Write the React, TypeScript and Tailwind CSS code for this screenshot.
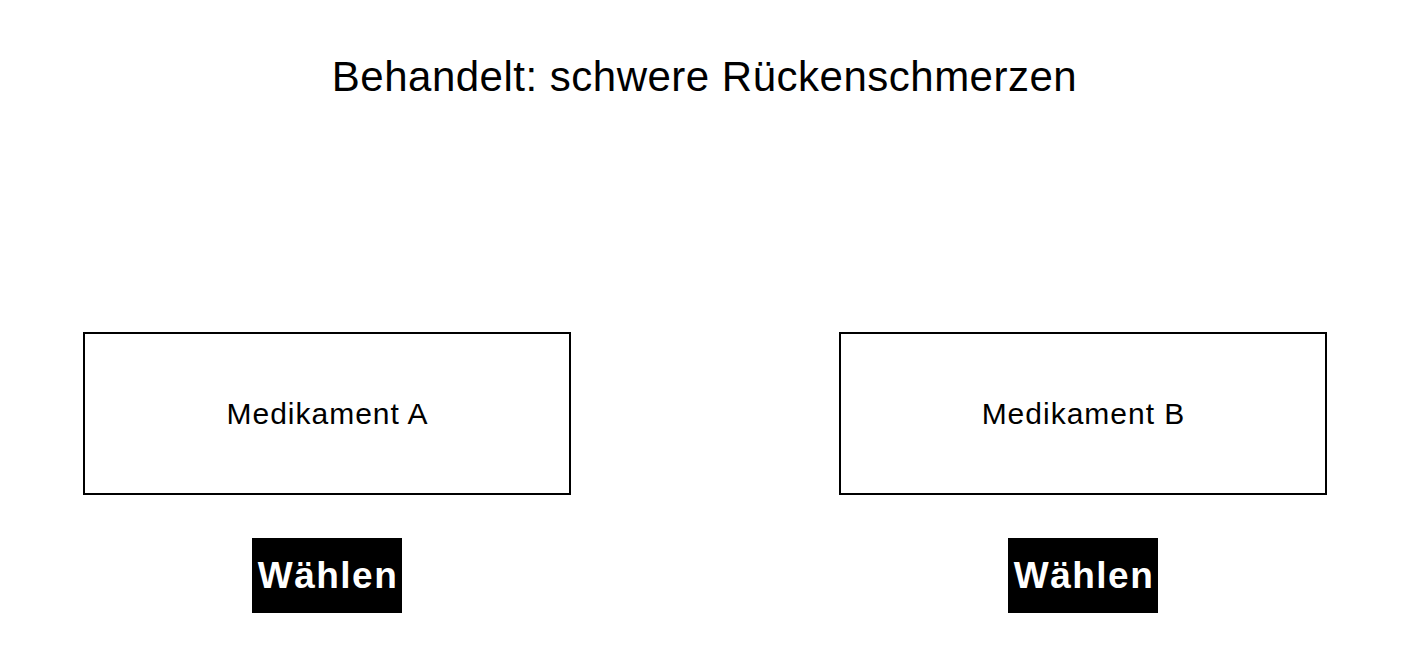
import React from "react";

function Option({ label }: { label: string }) {
  return (
    <div className="flex flex-col items-center">
      <div className="w-[488px] h-[163px] border-2 border-black flex items-center justify-center">
        <span className="text-[30px] leading-[34px] tracking-[1px] pl-[1px] text-black">{label}</span>
      </div>
      <button className="mt-[43px] w-[150px] h-[75px] bg-black text-white font-bold text-[37px] tracking-[1.5px] pl-[2px] flex items-center justify-center">
        Wählen
      </button>
    </div>
  );
}

export default function App() {
  return (
    <div
      className="w-[1419px] h-[668px] bg-white text-black overflow-hidden"
      style={{ fontFamily: '"Liberation Sans", Arial, sans-serif' }}
    >
      <div className="pt-[54px] flex justify-center pr-[10px]">
        <h1 className="text-[42px] leading-[46px] tracking-[0.5px] font-normal">Behandelt: schwere Rückenschmerzen</h1>
      </div>
      <div className="mt-[232px] flex pl-[83px] gap-[268px]">
        <Option label="Medikament A" />
        <Option label="Medikament B" />
      </div>
    </div>
  );
}
